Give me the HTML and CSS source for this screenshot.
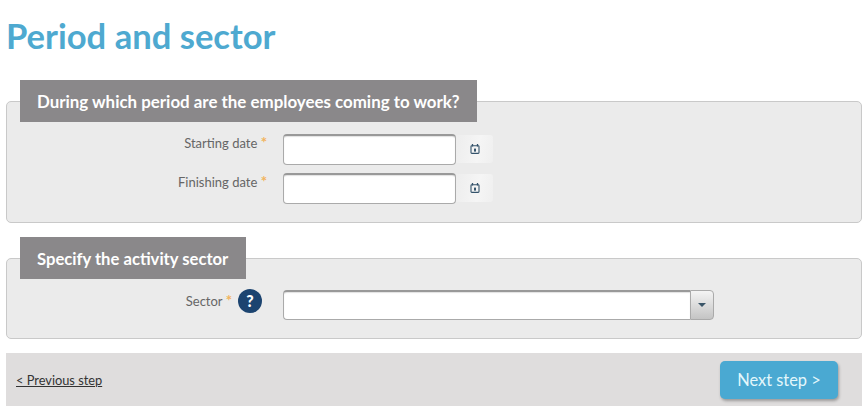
FILE: index.html
```html
<!DOCTYPE html>
<html lang="en">
<head>
    <meta charset="UTF-8">
    <meta name="viewport" content="width=device-width, initial-scale=1.0">
    <title>Period and sector</title>
    <link rel="stylesheet" href="styles.css">
</head>
<body>
    <h1 class="page-title">Period and sector</h1>

    <section class="panel panel-period">
        <h2 class="panel-title">During which period are the employees coming to work?</h2>
        <div class="form-row">
            <label class="field-label">Starting date <span class="required">*</span></label>
            <input type="text" class="text-input date-input">
            <button type="button" class="calendar-btn">
                <svg width="10" height="10" viewBox="0 0 10 10"><path d="M2.5 0v2.5M7.5 0v2.5" stroke="#34536b" stroke-width="1.3" fill="none"/><rect x="1" y="1.8" width="8" height="7.6" rx=".8" fill="none" stroke="#34536b" stroke-width="1.1"/><rect x="4" y="4.6" width="2" height="3" fill="#34536b"/></svg>
            </button>
        </div>
        <div class="form-row">
            <label class="field-label">Finishing date <span class="required">*</span></label>
            <input type="text" class="text-input date-input">
            <button type="button" class="calendar-btn">
                <svg width="10" height="10" viewBox="0 0 10 10"><path d="M2.5 0v2.5M7.5 0v2.5" stroke="#34536b" stroke-width="1.3" fill="none"/><rect x="1" y="1.8" width="8" height="7.6" rx=".8" fill="none" stroke="#34536b" stroke-width="1.1"/><rect x="4" y="4.6" width="2" height="3" fill="#34536b"/></svg>
            </button>
        </div>
    </section>

    <section class="panel panel-sector">
        <h2 class="panel-title">Specify the activity sector</h2>
        <div class="form-row">
            <label class="field-label">Sector <span class="required">*</span><span class="help-icon">?</span></label>
            <div class="combo">
                <input type="text" class="text-input sector-input">
                <button type="button" class="combo-btn"><span class="combo-arrow"></span></button>
            </div>
        </div>
    </section>

    <div class="step-bar">
        <a href="#" class="prev-link">&lt; Previous step</a>
        <button type="button" class="next-btn">Next step &gt;</button>
    </div>
</body>
</html>
```
FILE: styles.css
```css
body {
    font-family: Lato, "Open Sans", sans-serif;
    margin: 0;
    padding: 0 5px 0 6px;
    background-color: white;
    color: #666;
}
.page-title {
    color: #4ea9d0;
    font-size: 34.6px;
    font-weight: 700;
    line-height: 40px;
    margin: 0;
    padding: 16px 0 0 0;
    height: 45px;
}
.panel {
    background-color: #ebebeb;
    border: 1px solid #c9c9c9;
    border-radius: 5px;
}
.panel-period {
    margin-top: 40px;
    height: 120px;
}
.panel-sector {
    margin-top: 35px;
    height: 79px;
}
.panel-title {
    display: inline-block;
    background-color: #8a888a;
    color: white;
    font-size: 16.9px;
    font-weight: 700;
    line-height: 44px;
    height: 42px;
    margin: -22px 0 0 13px;
    padding: 0 17px;
    white-space: nowrap;
    vertical-align: top;
}
.panel-sector .panel-title {
    font-size: 16.65px;
    padding-right: 18px;
}
.form-row {
    display: flex;
    align-items: flex-start;
    margin-top: 12px;
    height: 31px;
}
.form-row + .form-row {
    margin-top: 8px;
}
.field-label {
    width: 260px;
    text-align: right;
    font-size: 13px;
    line-height: 18px;
    margin-right: 16px;
    position: relative;
}
.required {
    color: #f2b35c;
    font-size: 15px;
    font-weight: 700;
    line-height: 15px;
}
.help-icon {
    position: absolute;
    right: -30px;
    top: -1px;
    width: 24px;
    height: 24px;
    border-radius: 50%;
    background-color: #1c4470;
    color: white;
    font-size: 16px;
    font-weight: 900;
    line-height: 24px;
    text-align: center;
}
.panel-sector .form-row {
    margin-top: 11px;
    height: 30px;
}
.panel-sector .field-label {
    width: 225px;
    padding-top: 2px;
    margin-right: 51px;
}
.text-input {
    box-sizing: border-box;
    height: 31px;
    background-color: white;
    border: 1px solid #aaa;
    border-top: 2px solid #999;
    border-radius: 4px;
    box-shadow: inset 0 1px 1px rgba(0, 0, 0, 0.12);
    padding: 0 6px;
    margin: 0;
}
.date-input {
    width: 173px;
}
.calendar-btn {
    width: 37px;
    height: 28px;
    margin-top: 1px;
    padding: 0;
    border: none;
    border-radius: 0 3px 3px 0;
    background: linear-gradient(100deg, #ededed, #f5f5f5 60%, #efefef);
    display: flex;
    align-items: center;
    justify-content: center;
}
.combo {
    display: flex;
}
.sector-input {
    width: 407px;
    height: 30px;
    border-radius: 4px 0 0 4px;
    border-right: none;
}
.combo-btn {
    width: 24px;
    height: 30px;
    padding: 0;
    border: 1px solid #aaa;
    border-radius: 0 4px 4px 0;
    background: linear-gradient(#f4f4f4, #c4c4c4);
    display: flex;
    align-items: center;
    justify-content: center;
}
.combo-arrow {
    width: 0;
    height: 0;
    border-left: 4px solid transparent;
    border-right: 4px solid transparent;
    border-top: 4px solid #3a5568;
}
.step-bar {
    display: flex;
    justify-content: space-between;
    align-items: center;
    background-color: #dfdddd;
    height: 53px;
    margin-top: 14px;
    padding: 0 24px 0 10px;
}
.prev-link {
    color: #333;
    font-size: 12.8px;
}
.next-btn {
    width: 118px;
    height: 38px;
    background-color: #4aa9d2;
    color: #e4f7fb;
    font-family: Lato, "Open Sans", sans-serif;
    font-size: 16.4px;
    border: none;
    border-radius: 5px;
    box-shadow: 1px 2px 3px rgba(0, 0, 0, 0.3);
}
```
